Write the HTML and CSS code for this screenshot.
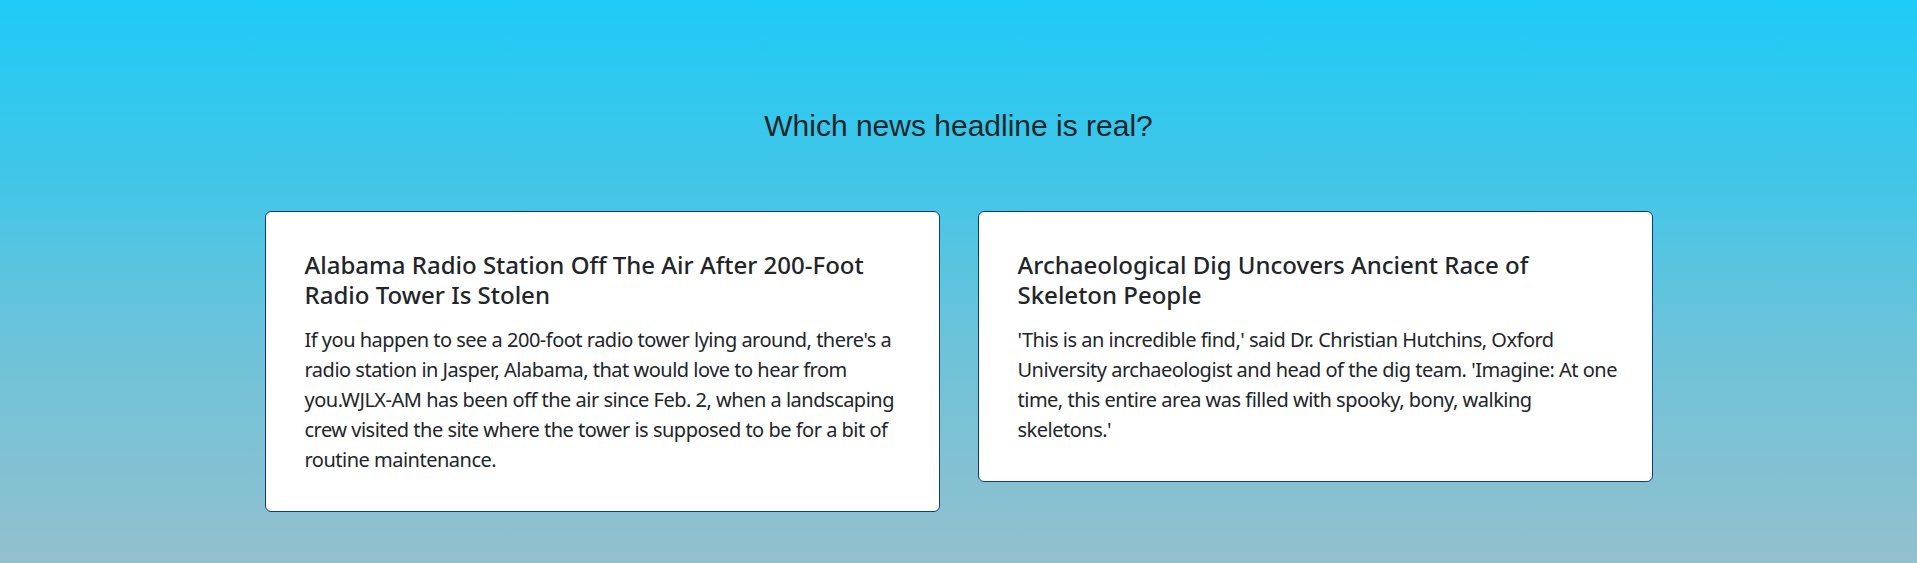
FILE: index.html
```html
<!DOCTYPE html>
<html lang="en">
<head>
<meta charset="utf-8">
<title>Which news headline is real?</title>
<link rel="stylesheet" href="styles.css">
</head>
<body>
<main class="page">
  <h1 class="title">Which news headline is real?</h1>
  <div class="cards">
    <article class="card">
      <h2 class="card-title">Alabama Radio Station Off The Air After 200-Foot<br>Radio Tower Is Stolen</h2>
      <p class="card-text">If you happen to see a 200-foot radio tower lying around, there's a<br>radio station in Jasper, Alabama, that would love to hear from<br>you.WJLX-AM has been off the air since Feb. 2, when a landscaping<br>crew visited the site where the tower is supposed to be for a bit of<br>routine maintenance.</p>
    </article>
    <article class="card">
      <h2 class="card-title">Archaeological Dig Uncovers Ancient Race of<br>Skeleton People</h2>
      <p class="card-text">'This is an incredible find,' said Dr. Christian Hutchins, Oxford<br>University archaeologist and head of the dig team. 'Imagine: At one<br>time, this entire area was filled with spooky, bony, walking<br>skeletons.'</p>
    </article>
  </div>
</main>
</body>
</html>
```
FILE: styles.css
```css
* { box-sizing: border-box; }
html, body { margin: 0; padding: 0; }
body {
  font-family: "Noto Sans", "Open Sans", sans-serif;
  color: #212529;
}
.page {
  min-height: 563px;
  background: linear-gradient(to bottom, #1ecbf7 0%, #3fc6e8 30%, #6cc3da 60%, #93c0cd 100%);
  padding-top: 108px;
}
.title {
  margin: 0;
  text-align: center;
  font-family: "Liberation Sans", Arial, sans-serif;
  font-weight: 400;
  font-size: 30px;
  line-height: 36px;
  color: #212529;
}
.cards {
  display: flex;
  justify-content: center;
  align-items: flex-start;
  gap: 38px;
  margin-top: 67px;
}
.card {
  width: 675px;
  background: #fff;
  border: 1px solid #0b3a86;
  border-radius: 6px;
  padding: 38px 6px 36px 39px;
}
.card-title {
  margin: 0 0 15px;
  font-size: 24px;
  line-height: 30px;
  font-weight: 500;
}
.card-text {
  margin: 0;
  font-size: 20px;
  line-height: 30px;
  letter-spacing: -0.5px;
}
```
